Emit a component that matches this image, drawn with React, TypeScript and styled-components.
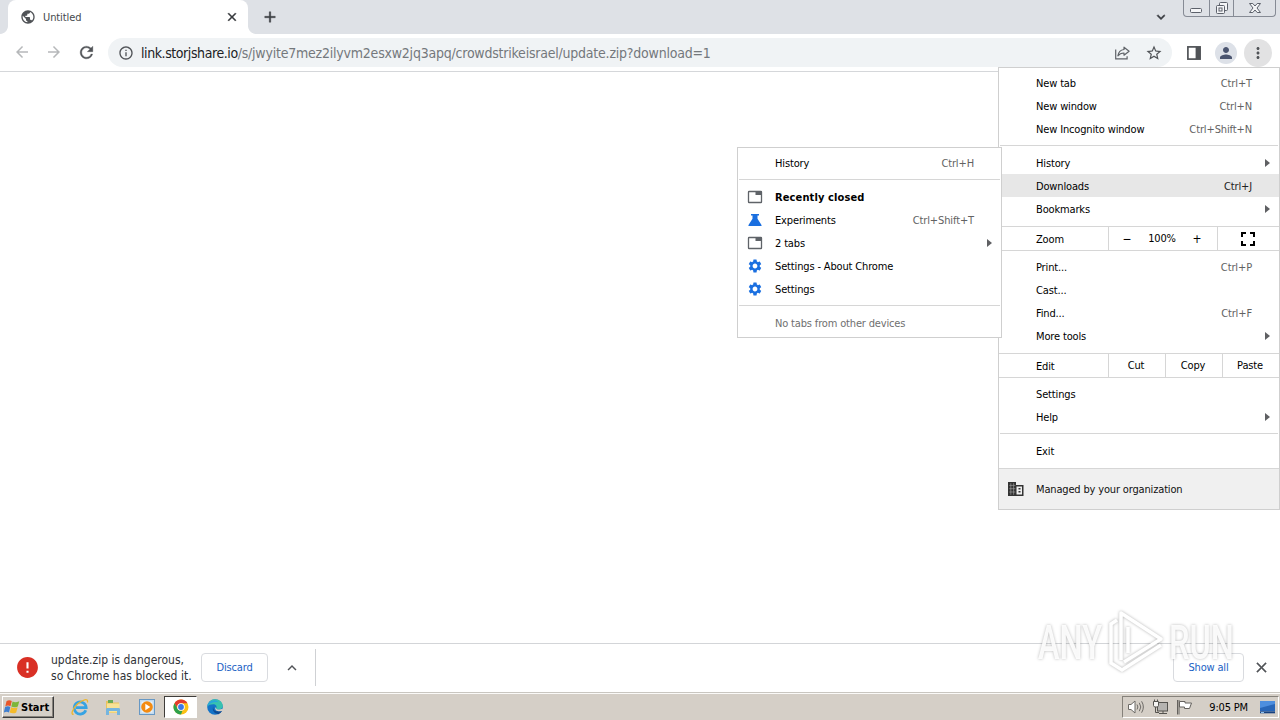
import React from 'react';
import styled, { createGlobalStyle } from 'styled-components';
import {
  MdArrowBack, MdArrowForward, MdRefresh, MdInfoOutline, MdStarOutline, MdPerson,
  MdMoreVert, MdClose, MdAdd, MdPublic, MdSettings, MdFullscreen,
  MdExpandMore, MdExpandLess, MdError,
} from 'react-icons/md';

const ui = '"DejaVu Sans Condensed", "DejaVu Sans", sans-serif';

const GlobalStyle = createGlobalStyle`
  * { box-sizing: border-box; }
  body { margin: 0; background: #fff; font-family: ${ui}; font-size: 11px; color: #000; }
  svg { display: block; flex: none; }
  path[d^="M0 0h24v24"] { stroke: none; }
`;

const Desktop = styled.div`
  position: relative;
  width: 1280px;
  height: 720px;
  overflow: hidden;
  display: flex;
  flex-direction: column;
  background: #fff;
`;

const Text = styled.span<{ $size?: number; $track?: number; $color?: string; $bold?: boolean }>`
  font-size: ${p => p.$size ?? 11}px;
  letter-spacing: ${p => p.$track ?? -0.16}px;
  color: ${p => p.$color ?? 'inherit'};
  font-weight: ${p => (p.$bold ? 700 : 400)};
  white-space: pre;
`;

/* ---------- tab strip ---------- */
const TabStrip = styled.header`
  height: 34px;
  flex: none;
  display: flex;
  align-items: flex-start;
  background: #dee1e6;
`;
const Tab = styled.div`
  width: 240px;
  height: 34px;
  margin-left: 8px;
  padding: 0 9px 0 12px;
  display: flex;
  align-items: center;
  background: #fff;
  color: #45494d;
  border-radius: 8px 8px 0 0;
  svg + span { margin-left: 7px; flex: 1; }
`;
const TabFoot = styled.div<{ $side: 'left' | 'right' }>`
  width: 8px;
  height: 8px;
  align-self: flex-end;
  margin-right: ${p => (p.$side === 'left' ? '-8px' : '0')};
  background: radial-gradient(circle at ${p => (p.$side === 'left' ? '0 0' : '100% 0')}, #dee1e6 7.5px, #fff 8.3px);
`;
const NewTab = styled.div`
  height: 34px;
  margin-left: 5px;
  display: flex;
  align-items: center;
  color: #3a3d42;
`;
const TabSearch = styled.div`
  height: 34px;
  margin: 0 14px 0 auto;
  display: flex;
  align-items: center;
  color: #3a3d42;
`;
const WindowButtons = styled.div`
  display: flex;
  width: 93px;
  height: 17px;
  margin-right: 4px;
  border: 1px solid #868b95;
  border-top: 0;
  border-radius: 0 0 4px 4px;
`;
const WindowButton = styled.div<{ $w: number }>`
  width: ${p => p.$w}px;
  display: flex;
  justify-content: center;
  & + & { border-left: 1px solid #868b95; }
`;

/* ---------- toolbar ---------- */
const Toolbar = styled.nav`
  height: 38px;
  flex: none;
  display: flex;
  align-items: center;
  border-bottom: 1px solid #d5d7da;
  padding: 0 8px 0 13px;
  color: #505357;
`;
const NavIcons = styled.div`
  display: flex;
  gap: 14px;
  width: 95px;
`;
const NavIcon = styled.div<{ $off?: boolean }>`
  color: ${p => (p.$off ? '#b6b8ba' : '#505357')};
`;
const Omnibox = styled.div`
  width: 1064px;
  height: 29px;
  padding: 0 9px 0 10px;
  border-radius: 15px;
  background: #f0f3f5;
  display: flex;
  align-items: center;
`;
const Url = styled.div`
  flex: 1;
  display: flex;
  margin-left: 7px;
  padding-top: 1px;
`;
const OmniActions = styled.div`
  display: flex;
  align-items: center;
  gap: 14px;
`;
const ToolbarActions = styled.div`
  display: flex;
  align-items: center;
  margin-left: auto;
`;
const Round = styled.div<{ $d: number; $bg: string; $ml: number; $fg: string }>`
  width: ${p => p.$d}px;
  height: ${p => p.$d}px;
  margin-left: ${p => p.$ml}px;
  border-radius: 50%;
  background: ${p => p.$bg};
  color: ${p => p.$fg};
  display: flex;
  align-items: center;
  justify-content: center;
`;

const Page = styled.main`
  flex: 1;
`;

/* ---------- menus ---------- */
const Menu = styled.div<{ $x: number; $y: number; $w: number; $foot?: number }>`
  position: absolute;
  left: ${p => p.$x}px;
  top: ${p => p.$y}px;
  width: ${p => p.$w}px;
  border: 1px solid #cfcfcf;
  background: #fff;
  padding: 3px 0 ${p => p.$foot ?? 0}px;
  display: flex;
  flex-direction: column;
`;
const Item = styled.div<{ $hover?: boolean; $right: number }>`
  height: 23px;
  padding-right: ${p => p.$right}px;
  display: flex;
  align-items: center;
  background: ${p => (p.$hover ? '#e7e7e7' : 'transparent')};
  span { padding-top: 2px; }
`;
const IconSlot = styled.div`
  width: 37px;
  padding-left: 9px;
  flex: none;
`;
const Accel = styled.div<{ $dark?: boolean }>`
  margin-left: auto;
  padding-top: 2px;
  color: ${p => (p.$dark ? '#222' : '#626262')};
`;
const Caret = styled.div`
  margin: 0 -18px 0 auto;
  border-left: 5px solid #5f6063;
  border-top: 4px solid transparent;
  border-bottom: 4px solid transparent;
`;
const Rule = styled.div<{ $above?: number; $below?: number }>`
  height: 1px;
  flex: none;
  margin: ${p => p.$above ?? 5}px 1px ${p => p.$below ?? 5}px;
  background: #d6d6d6;
`;
const SplitRow = styled.div<{ $above: number; $below: number }>`
  height: 25px;
  margin: ${p => p.$above}px 0 ${p => p.$below}px;
  border-top: 1px solid #d6d6d6;
  border-bottom: 1px solid #d6d6d6;
  display: flex;
`;
const Cell = styled.div<{ $w?: number; $first?: boolean; $last?: boolean }>`
  width: ${p => (p.$w ? `${p.$w}px` : 'auto')};
  flex: ${p => (p.$w ? 'none' : 1)};
  display: flex;
  align-items: center;
  justify-content: ${p => (p.$first ? 'flex-start' : 'center')};
  padding: ${p => (p.$first ? '1px 0 0 37px' : '0 2px 0 0')};
  border-left: ${p => (p.$first ? '0' : '1px solid #d6d6d6')};
`;
const ZoomValue = styled.div`
  width: 61px;
  text-align: center;
`;
const Managed = styled.div`
  height: 41px;
  margin-top: 6px;
  border-top: 1px solid #d6d6d6;
  background: #f0f0f0;
  display: flex;
  align-items: center;
  color: #111;
`;

/* ---------- download shelf ---------- */
const Shelf = styled.section`
  height: 49px;
  flex: none;
  display: flex;
  align-items: center;
  border-top: 1px solid #d3d5d8;
  padding: 0 10px 1px 15px;
  background: #fff;
`;
const Warning = styled.div`
  width: 150px;
  margin-left: 11px;
  display: flex;
  flex-direction: column;
  line-height: 16px;
  color: #303236;
`;
const ShelfButton = styled.div<{ $w: number; $ml?: string }>`
  width: ${p => p.$w}px;
  height: 29px;
  margin-left: ${p => p.$ml ?? '0'};
  border: 1px solid #d9dbdf;
  border-radius: 4px;
  display: flex;
  align-items: center;
  justify-content: center;
  color: #1b62c4;
`;
const ShelfIcon = styled.div<{ $ml: number }>`
  margin-left: ${p => p.$ml}px;
  color: #505357;
`;
const ShelfDivider = styled.div`
  width: 1px;
  height: 37px;
  margin-left: 14px;
  background: #cfd1d4;
`;

/* ---------- taskbar ---------- */
const Taskbar = styled.footer`
  height: 28px;
  flex: none;
  display: flex;
  align-items: flex-start;
  background: #d5cfc7;
  border-top: 1px solid #c9c6c0;
  box-shadow: inset 0 1px 0 #fbfaf8;
  padding: 3px 1px 0 2px;
`;
const Start = styled.div`
  width: 52px;
  height: 22px;
  border: 1px solid;
  border-color: #fff #3c3c3c #3c3c3c #fff;
  box-shadow: inset -1px -1px 0 #87837c;
  display: flex;
  align-items: center;
  gap: 1px;
  padding-left: 1px;
`;
const Launcher = styled.div<{ $w: number; $active?: boolean }>`
  width: ${p => p.$w}px;
  height: 22px;
  display: flex;
  align-items: center;
  justify-content: center;
  background: ${p => (p.$active ? '#fff' : 'transparent')};
  border: ${p => (p.$active ? '1px solid' : '0')};
  border-color: #3f3d3a #fff #fff #3f3d3a;
`;
const QuickLaunch = styled.div`
  display: flex;
  margin-left: 10px;
`;
const Tray = styled.div`
  width: 157px;
  height: 22px;
  margin-left: auto;
  border: 1px solid;
  border-color: #85817a #fff #fff #85817a;
  display: flex;
  align-items: center;
  padding: 0 2px 0 4px;
`;
const TrayIcons = styled.div`
  display: flex;
  align-items: center;
  gap: 7px;
`;
const Clock = styled.div`
  margin: 0 0 0 auto;
  padding-right: 11px;
`;

const Watermark = styled.svg`
  position: absolute;
  left: 1030px;
  top: 602px;
  overflow: visible;
  filter: drop-shadow(0 0 1.8px rgba(0, 0, 0, 0.3));
`;

/* ---------- drawings ---------- */
const TabGlyph = () => (
  <svg width="16" height="14" viewBox="0 0 16 14">
    <rect x="1.500" y="1.500" width="13" height="11" rx="0.6" fill="#fff" stroke="#5f6368" strokeWidth="1.300" />
    <rect x="8.500" y="1.500" width="6" height="3.500" fill="#5f6368" />
  </svg>
);
const Flask = () => (
  <svg width="16" height="14" viewBox="0 0 16 14">
    <path d="M4 1h8v1.500h-1.500v3.300l4 6.200c.3.600 0 1-.6 1h-11.800c-.6 0-.9-.4-.6-1l4-6.200V2.500H4z" fill="#1a6fe0" />
  </svg>
);
const Building = () => (
  <svg width="16" height="14" viewBox="0 0 16 14">
    <path d="M0 0h8v3h7.500v11H0z" fill="#333" />
    <path d="M8.500 4.500H14v8H8.500z" fill="#f0f0f0" />
    <path d="M10.500 6h2v1.500h-2zM10.500 9h2v1.500h-2z" fill="#333" />
    <path d="M1.300 3.400h6M1.300 6.700h6M1.300 10h6M2.800 1.200v11.600M5.600 1.200v11.600" stroke="#a8a8a8" strokeWidth="0.600" />
  </svg>
);
const ShareGlyph = () => (
  <svg width="17" height="16" viewBox="0 0 17 16" fill="none" stroke="#5f6368" strokeWidth="1.200">
    <path d="M1.700 4.500v9.300h11.400v-2.500" />
    <path d="M10 2.200l5.100 4-5.100 4V8C7.300 8 5.300 8.900 3.900 10.800 4.400 7.400 6.500 5 10 4.500z" strokeLinejoin="round" />
  </svg>
);
const PanelGlyph = () => (
  <svg width="14" height="14" viewBox="0 0 14 14">
    <rect x="0.900" y="0.900" width="12.200" height="12.200" fill="#fff" stroke="#505357" strokeWidth="1.700" />
    <rect x="8.600" y="1" width="4.500" height="12" fill="#505357" />
  </svg>
);
const WindowsFlag = () => (
  <svg width="16" height="16" viewBox="0 0 16 16">
    <path d="M2.500 2.300C4.500.8 6 1 7.800 2.100L6.500 7.300C4.800 6.300 3.200 6.200 1.300 7.400z" fill="#e8562a" />
    <path d="M8.600 2.500C10.500 3.500 12.300 3.500 15.300 2.200L13.800 7.400C11.500 8.600 9.500 8.600 7.300 7.600z" fill="#7db63a" />
    <path d="M1.100 8.100C3 6.900 4.700 7 6.300 8L5 13.400C3.300 12.500 1.700 12.500-.2 13.500z" fill="#3f7fd0" />
    <path d="M7.100 8.300C9 9.300 11 9.300 13.600 8.200L12.200 13.500C10 14.700 7.900 14.500 5.700 13.600z" fill="#f5bb2b" />
  </svg>
);
const IELogo = () => (
  <svg width="18" height="18" viewBox="0 0 18 18" fill="none">
    <path d="M14.800 12.200A6 6 0 1 1 15.200 9.600H5" stroke="#36a3e3" strokeWidth="2.700" />
    <path d="M2.700 16C-.5 17.500 1 11 6.500 6 11.500 1.700 17.500-.3 16.500 4.500" stroke="#eeb62d" strokeWidth="1.300" />
  </svg>
);
const Explorer = () => (
  <svg width="18" height="18" viewBox="0 0 18 18">
    <path d="M2 3h5l1.500 1.500H15V15H2z" fill="#e9c35d" />
    <rect x="4" y="2" width="5" height="3" fill="#6aab55" />
    <rect x="3" y="5.500" width="12.500" height="9" fill="#f7e296" />
    <path d="M2 17v-5.500c0-1 .5-1.500 1.500-1.500h11c1 0 1.500.5 1.500 1.500V17h-3v-4H5v4z" fill="#75b5df" />
  </svg>
);
const MediaPlayer = () => (
  <svg width="18" height="18" viewBox="0 0 18 18">
    <rect x="1.500" y="1.500" width="15" height="15" fill="#c2dbef" stroke="#6798c4" />
    <rect x="3.500" y="3.500" width="11" height="11" fill="#e9f2f9" />
    <circle cx="9" cy="9" r="5.800" fill="#f38b12" />
    <path d="M7.300 5.800v6.400l5-3.200z" fill="#fff" />
  </svg>
);
const ChromeLogo = () => (
  <svg width="16" height="16" viewBox="0 0 16 16">
    <circle cx="8" cy="8" r="7.500" fill="#fbc116" />
    <path d="M1.500 4.250A7.500 7.500 0 0 1 14.500 4.250H8A3.750 3.750 0 0 0 4.750 9.880z" fill="#e33b2e" />
    <path d="M1.500 4.250L4.750 9.880A3.750 3.750 0 0 0 9.500 11.450L8 15.500A7.500 7.500 0 0 1 1.500 4.250z" fill="#2da14c" />
    <circle cx="8" cy="8" r="3.800" fill="#fff" />
    <circle cx="8" cy="8" r="2.900" fill="#3b78e7" />
  </svg>
);
const EdgeLogo = () => (
  <svg width="18" height="18" viewBox="0 0 18 18">
    <circle cx="9" cy="9" r="7.800" fill="#1473c8" />
    <path d="M1.300 8.500C2 3.800 5.200 1.200 9 1.200c4.500 0 7.800 3.300 7.800 6.600 0 2.500-2 3.800-4.300 3.800-1.600 0-2.500-.6-2.300-1.200.9-1.500.2-4.100-3-4.100-2.600 0-4.700.8-5.900 2.200z" fill="#37c2b0" />
    <path d="M1.300 8.500C2 4.500 5 2.400 8.400 2.300c2 0 3.300.9 3.900 2-3.400-1-8.300-.1-11 4.200z" fill="#28a5dd" />
    <path d="M7.500 8.300c-1.200 3.500 2 6.300 7.500 4.500l1 .2c-1 1.500-2 2.500-3.500 3.200C8 15.800 5.500 11.800 7.500 8.300z" fill="#0d4b94" />
    <path d="M9.500 9c.3 2.600 3.500 3.300 7 1.800l1 2-2 .2c-3.500 1-7.500-.7-6-4z" fill="#d5cfc7" />
  </svg>
);
const Speaker = () => (
  <svg width="18" height="16" viewBox="0 0 18 16" fill="none" stroke="#6d6a66">
    <path d="M1.500 5.500h2.500l4-3.500v12l-4-3.500H1.500z" fill="#fff" />
    <path d="M10 5.500q1.800 2.500 0 5M12.300 3.800q3 4.200 0 8.400M14.600 2.300q3.500 5.700 0 11.400" />
  </svg>
);
const Network = () => (
  <svg width="17" height="16" viewBox="0 0 17 16" fill="#f6f5f3" stroke="#55534f">
    <rect x="5.500" y="3.500" width="10" height="8.500" fill="#b5b3b0" />
    <path d="M7 14.500h8M3.500 7v6.500H7M11 12v2.500" fill="none" />
    <path d="M1.500 2.500h5v4l-1 1.500h-3l-1-1.500zM2.500.5v2M5.500.5v2" />
  </svg>
);
const ActionFlag = () => (
  <svg width="17" height="16" viewBox="0 0 17 16" fill="#fff" stroke="#65625e">
    <path d="M1.500 1v14.500M3 1v14.500" fill="none" />
    <path d="M3.500 2.500h5.500v1.500h6.500l-2 5.500H8.500V8h-5z" />
  </svg>
);
const DesktopGlyph = () => (
  <svg width="17" height="15" viewBox="0 0 17 15">
    <rect x="1" y="1" width="15" height="10.500" fill="#2866b8" />
    <path d="M1 1h15v3L1 8z" fill="#4d8ede" />
    <rect x="1" y="11.500" width="15" height="1.800" fill="#17417f" />
    <rect x="2" y="12" width="3" height="1" fill="#8fc3f3" />
  </svg>
);

type Entry = { label: string; keys?: string; sub?: boolean; hover?: boolean; icon?: React.ReactNode; bold?: boolean };
const Row = ({ e, right = 27 }: { e: Entry; right?: number }) => (
  <Item $hover={e.hover} $right={right}>
    <IconSlot>{e.icon}</IconSlot>
    <Text $bold={e.bold} $track={e.bold ? 0.12 : -0.15}>{e.label}</Text>
    {e.keys && <Accel $dark={e.hover}><Text $track={-0.12}>{e.keys}</Text></Accel>}
    {e.sub && <Caret />}
  </Item>
);

const openItems: Entry[] = [
  { label: 'New tab', keys: 'Ctrl+T' },
  { label: 'New window', keys: 'Ctrl+N' },
  { label: 'New Incognito window', keys: 'Ctrl+Shift+N' },
];
const browseItems: Entry[] = [
  { label: 'History', sub: true },
  { label: 'Downloads', keys: 'Ctrl+J', hover: true },
  { label: 'Bookmarks', sub: true },
];
const pageItems: Entry[] = [
  { label: 'Print...', keys: 'Ctrl+P' },
  { label: 'Cast...' },
  { label: 'Find...', keys: 'Ctrl+F' },
  { label: 'More tools', sub: true },
];
const helpItems: Entry[] = [{ label: 'Settings' }, { label: 'Help', sub: true }];
const closedItems: Entry[] = [
  { label: 'Recently closed', bold: true, icon: <TabGlyph /> },
  { label: 'Experiments', keys: 'Ctrl+Shift+T', icon: <Flask /> },
  { label: '2 tabs', sub: true, icon: <TabGlyph /> },
  { label: 'Settings - About Chrome', icon: <MdSettings size={16} color="#1a6fe0" /> },
  { label: 'Settings', icon: <MdSettings size={16} color="#1a6fe0" /> },
];

export default function App() {
  return (
    <Desktop>
      <GlobalStyle />
      <TabStrip>
        <TabFoot $side="left" />
        <Tab>
          <MdPublic size={16} color="#505357" />
          <Text $track={-0.1}>Untitled</Text>
          <MdClose size={14} color="#33363a" stroke="#33363a" strokeWidth={0.8} />
        </Tab>
        <TabFoot $side="right" />
        <NewTab><MdAdd size={18} stroke="currentColor" strokeWidth={0.5} /></NewTab>
        <TabSearch><MdExpandMore size={16} stroke="currentColor" strokeWidth={0.8} /></TabSearch>
        <WindowButtons>
          <WindowButton $w={25}>
            <svg width="14" height="16" viewBox="0 0 14 16"><rect x="1.500" y="8.500" width="11" height="4" rx="1" fill="#f4f5f7" stroke="#5c616b" /></svg>
          </WindowButton>
          <WindowButton $w={25}>
            <svg width="14" height="16" viewBox="0 0 14 16" fill="#f4f5f7" stroke="#5c616b">
              <rect x="4.500" y="2.500" width="8" height="8" rx="1" />
              <rect x="1.500" y="5.500" width="8" height="8" rx="1" />
              <rect x="4" y="8" width="3" height="3" />
            </svg>
          </WindowButton>
          <WindowButton $w={42}>
            <svg width="14" height="16" viewBox="0 0 14 16">
              <path d="M1.500 3.500h3.300L7 6l2.200-2.500h3.300L9 8l3.500 4.500H9.200L7 10l-2.200 2.500H1.500L5 8z" fill="#f4f5f7" stroke="#5c616b" />
            </svg>
          </WindowButton>
        </WindowButtons>
      </TabStrip>

      <Toolbar>
        <NavIcons>
          <NavIcon $off><MdArrowBack size={18} /></NavIcon>
          <NavIcon $off><MdArrowForward size={18} /></NavIcon>
          <NavIcon><MdRefresh size={19} stroke="currentColor" strokeWidth={0.4} /></NavIcon>
        </NavIcons>
        <Omnibox>
          <MdInfoOutline size={16} />
          <Url>
            <Text $size={14} $track={-0.42} $color="#202124">link.storjshare.io</Text>
            <Text $size={14} $track={-0.22} $color="#74787c">/s/jwyite7mez2ilyvm2esxw2jq3apq/crowdstrikeisrael/update.zip?download=1</Text>
          </Url>
          <OmniActions>
            <ShareGlyph />
            <MdStarOutline size={18} />
          </OmniActions>
        </Omnibox>
        <ToolbarActions>
          <PanelGlyph />
          <Round $d={22} $bg="#dde1e8" $ml={14} $fg="#4b5570"><MdPerson size={18} /></Round>
          <Round $d={28} $bg="#e2e2e3" $ml={7} $fg="#505357"><MdMoreVert size={18} /></Round>
        </ToolbarActions>
      </Toolbar>

      <Page />

      <Shelf>
        <MdError size={25} color="#d93025" />
        <Warning>
          <Text $size={12} $track={0}>update.zip is dangerous,</Text>
          <Text $size={12} $track={0.04}>so Chrome has blocked it.</Text>
        </Warning>
        <ShelfButton $w={67}><Text>Discard</Text></ShelfButton>
        <ShelfIcon $ml={15}><MdExpandLess size={18} /></ShelfIcon>
        <ShelfDivider />
        <ShelfButton $w={71} $ml="auto"><Text>Show all</Text></ShelfButton>
        <ShelfIcon $ml={9}><MdClose size={17} stroke="currentColor" strokeWidth={0.5} /></ShelfIcon>
      </Shelf>

      <Taskbar>
        <Start>
          <WindowsFlag />
          <Text $bold $track={0}>Start</Text>
        </Start>
        <QuickLaunch>
          <Launcher $w={31}><IELogo /></Launcher>
          <Launcher $w={35}><Explorer /></Launcher>
          <Launcher $w={34}><MediaPlayer /></Launcher>
          <Launcher $w={33} $active><ChromeLogo /></Launcher>
          <Launcher $w={36}><EdgeLogo /></Launcher>
        </QuickLaunch>
        <Tray>
          <TrayIcons><Speaker /><Network /><ActionFlag /></TrayIcons>
          <Clock><Text>9:05 PM</Text></Clock>
          <DesktopGlyph />
        </Tray>
      </Taskbar>

      <Menu $x={998} $y={67} $w={282}>
        {openItems.map(e => <Row key={e.label} e={e} />)}
        <Rule />
        {browseItems.map(e => <Row key={e.label} e={e} />)}
        <SplitRow $above={6} $below={4}>
          <Cell $w={109} $first><Text>Zoom</Text></Cell>
          <Cell $w={109}>
            <Text $size={12}>−</Text>
            <ZoomValue><Text>100%</Text></ZoomValue>
            <Text $size={12}>+</Text>
          </Cell>
          <Cell><MdFullscreen size={24} /></Cell>
        </SplitRow>
        {pageItems.map(e => <Row key={e.label} e={e} />)}
        <SplitRow $above={6} $below={4}>
          <Cell $w={109} $first><Text>Edit</Text></Cell>
          <Cell $w={57}><Text>Cut</Text></Cell>
          <Cell $w={57}><Text>Copy</Text></Cell>
          <Cell><Text>Paste</Text></Cell>
        </SplitRow>
        {helpItems.map(e => <Row key={e.label} e={e} />)}
        <Rule />
        <Row e={{ label: 'Exit' }} />
        <Managed>
          <IconSlot><Building /></IconSlot>
          <Text>Managed by your organization</Text>
        </Managed>
      </Menu>

      <Menu $x={737} $y={147} $w={265} $foot={3}>
        <Row e={{ label: 'History', keys: 'Ctrl+H' }} />
        <Rule />
        {closedItems.map(e => <Row key={e.label} e={e} />)}
        <Rule />
        <Item $right={27}>
          <IconSlot />
          <Text $color="#6f6f6f">No tabs from other devices</Text>
        </Item>
      </Menu>

      <Watermark width="215" height="80" viewBox="0 0 215 80">
        <g fill="#fff" fillOpacity="0.9" fontFamily="Roboto, sans-serif" fontSize="49" fontWeight="500">
          <text x="8" y="57" textLength="64" lengthAdjust="spacingAndGlyphs">ANY</text>
          <text x="139" y="57" textLength="65" lengthAdjust="spacingAndGlyphs">RUN</text>
        </g>
        <g fill="none" stroke="#fff" strokeWidth="3.500">
          <path d="M87 18L81 22V61L92 68L131 43" />
          <path d="M91 58V11L131 37L94 60M98 25V51" strokeLinejoin="round" />
        </g>
      </Watermark>
    </Desktop>
  );
}
